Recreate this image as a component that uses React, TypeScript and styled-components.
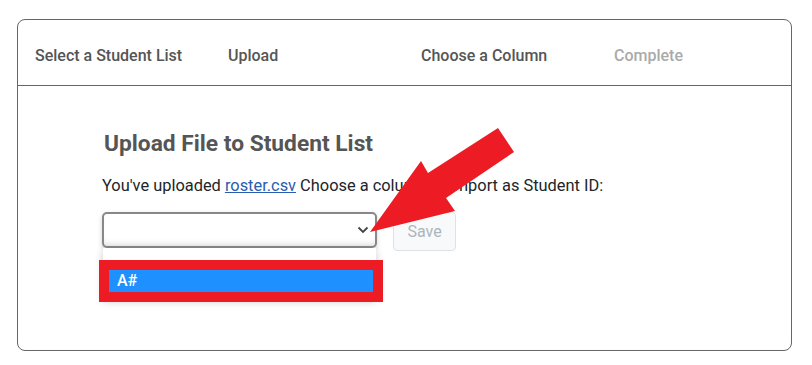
import styled, { createGlobalStyle } from "styled-components";

const GlobalStyle = createGlobalStyle`
  html, body {
    margin: 0;
    padding: 0;
    background: #ffffff;
    font-family: Roboto, "Liberation Sans", sans-serif;
  }
`;

const steps = [
  { label: "Select a Student List", done: true },
  { label: "Upload", done: true },
  { label: "Choose a Column", done: true },
  { label: "Complete", done: false },
];

export default function App() {
  return (
    <>
      <GlobalStyle />
      <Page>
        <Card>
          <StepBar>
            {steps.map((s) => (
              <Step key={s.label} active={s.done}>
                {s.label}
              </Step>
            ))}
          </StepBar>
          <Body>
            <Title>Upload File to Student List</Title>
            <Intro>
              You've uploaded <FileLink href="#">roster.csv</FileLink> Choose a column to import as Student ID:
            </Intro>
            <FormRow>
              <SelectWrap>
                <SelectBox>
                  <svg width="12" height="8" viewBox="0 0 12 8">
                    <polyline points="1.5,1.5 6,6 10.5,1.5" fill="none" stroke="#444" strokeWidth="1.8" />
                  </svg>
                </SelectBox>
                <Menu>
                  <Option>A#</Option>
                </Menu>
                <Highlight />
              </SelectWrap>
              <SaveButton disabled>Save</SaveButton>
            </FormRow>
            <Arrow width="160" height="120" viewBox="0 0 160 120">
              <polygon
                points="0,112 51,41 58,53 128,8 144,32 76,78 85,91"
                fill="#ed1c24"
              />
            </Arrow>
          </Body>
        </Card>
      </Page>
    </>
  );
}

const Page = styled.div`
  padding: 19px 20px 14px 17px;
`;

const Card = styled.div`
  width: 775px;
  height: 332px;
  box-sizing: border-box;
  border: 1px solid #666;
  border-radius: 8px;
  display: flex;
  flex-direction: column;
`;

const StepBar = styled.div`
  display: flex;
  height: 66px;
  align-items: center;
  padding: 5px 0 0 17px;
  box-sizing: border-box;
  border-bottom: 1px solid #666;
`;

const Step = styled.div<{ active: boolean }>`
  flex: 0 0 193px;
  font-size: 16px;
  font-weight: 500;
  color: ${(p) => (p.active ? "#555" : "#aaa")};
`;

const Body = styled.div`
  position: relative;
  flex: 1;
  padding: 44px 0 0 84px;
`;

const Title = styled.h2`
  margin: 0 0 0 2px;
  font-size: 22.75px;
  font-weight: 700;
  color: #555;
  line-height: 28px;
`;

const Intro = styled.p`
  margin: 18px 0 0;
  font-size: 16.4px;
  line-height: 20px;
  color: #212529;
`;

const FileLink = styled.a`
  color: #2a5db0;
  text-decoration: underline;
`;

const FormRow = styled.div`
  display: flex;
  align-items: flex-start;
  gap: 16px;
  margin-top: 16px;
`;

const SelectWrap = styled.div`
  position: relative;
`;

const SelectBox = styled.div`
  width: 275px;
  height: 36px;
  box-sizing: border-box;
  border: 2px solid #888;
  border-radius: 5px;
  background: #fff;
  box-shadow: inset 0 -6px 6px -4px rgba(0, 0, 0, 0.12), 0 2px 5px rgba(0, 0, 0, 0.18);
  display: flex;
  align-items: center;
  justify-content: flex-end;
  padding-right: 6px;
`;

const Menu = styled.div`
  position: absolute;
  left: 1px;
  top: 36px;
  width: 273px;
  height: 50px;
  background: #fff;
  box-shadow: 0 3px 8px rgba(0, 0, 0, 0.22);
  padding-top: 22px;
  box-sizing: border-box;
`;

const Option = styled.div`
  margin-left: 6px;
  width: 264px;
  height: 22px;
  background: #1e90ff;
  color: #fff;
  font-size: 16px;
  font-weight: 500;
  line-height: 22px;
  padding-left: 8px;
  box-sizing: border-box;
`;

const Highlight = styled.div`
  position: absolute;
  left: -3px;
  top: 48px;
  width: 284px;
  height: 42px;
  box-sizing: border-box;
  border: 10px solid #ed1c24;
`;

const SaveButton = styled.button`
  width: 63px;
  height: 39px;
  border: 1px solid #dee2e6;
  border-radius: 4px;
  background: #f8f9fa;
  color: #adb5bd;
  font-family: Roboto, "Liberation Sans", sans-serif;
  font-size: 16px;
  padding: 0;
`;

const Arrow = styled.svg`
  position: absolute;
  left: 352px;
  top: 34px;
`;
